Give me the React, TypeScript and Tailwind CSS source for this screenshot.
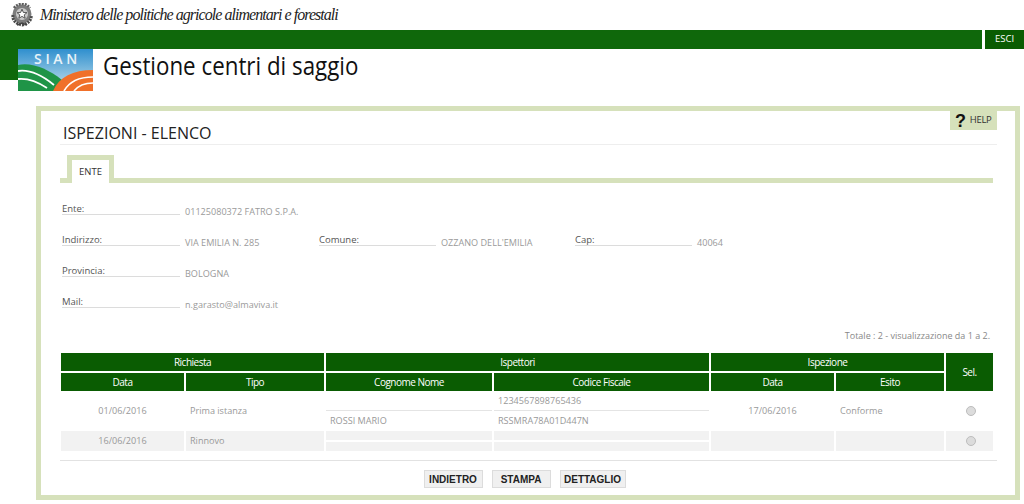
const FONT = "font-['Open_Sans',sans-serif]";

function Emblem() {
  return (
    <svg width="22" height="24" viewBox="0 0 22 24">
      <circle cx="11" cy="11" r="9.5" fill="#7d7d7d" />
      <path d="M2 12c-1 5 3 9 9 10 6-1 10-5 9-10" fill="none" stroke="#4a4a4a" strokeWidth="3" strokeDasharray="2 1" />
      <path d="M3 5c2-3 5-4 8-4s6 1 8 4" fill="none" stroke="#5c5c5c" strokeWidth="2.5" strokeDasharray="2 1" />
      <circle cx="11" cy="11" r="6" fill="#c9c9c9" />
      <path d="M11 6.2l1.4 3.3 3.5.2-2.7 2.2 1 3.4-3.2-1.9-3.2 1.9 1-3.4-2.7-2.2 3.5-.2z" fill="#fff" stroke="#333" strokeWidth="0.8" />
      <path d="M6 22l5-2 5 2" fill="none" stroke="#444" strokeWidth="1.5" />
    </svg>
  );
}

function SianLogo() {
  return (
    <svg width="75" height="42" viewBox="0 0 75 42" className="block">
      <defs>
        <linearGradient id="sky" x1="0" y1="0" x2="0" y2="1">
          <stop offset="0" stopColor="#2f8fce" />
          <stop offset="1" stopColor="#c9e4ee" />
        </linearGradient>
      </defs>
      <rect width="75" height="42" fill="url(#sky)" />
      <path d="M0 16c14-3 30 4 44 15l-8 11H0z" fill="#1f9447" />
      <path d="M0 22c13-2 25 5 36 14" fill="none" stroke="#fff" strokeWidth="1.8" />
      <path d="M0 30c10-1 20 3 29 9" fill="none" stroke="#fff" strokeWidth="1.8" />
      <path d="M35 42c6-14 20-21 40-21v21z" fill="#f0702a" />
      <path d="M46 42c5-9 15-14 29-14" fill="none" stroke="#fff" strokeWidth="1.7" />
      <path d="M56 42c4-5 10-8 19-8" fill="none" stroke="#fff" strokeWidth="1.7" />
      <text x="16" y="14.5" fill="#e8f3f8" fontSize="14" fontWeight="600" letterSpacing="3.7" fontFamily="Open Sans, sans-serif">SIAN</text>
    </svg>
  );
}

function Field({ label, value, width = "w-[118px]", valueW = "w-[134px]" }: { label: string; value: string; width?: string; valueW?: string }) {
  return (
    <div className="flex items-end">
      <div className={`${width} h-[15px] border-b border-[#dcdcdc] pt-[3px] text-[9.5px] leading-[11px] text-[#555]`}>{label}</div>
      <div className={`${valueW} translate-y-[2px] pl-[5px] text-[9.1px] leading-[11px] text-[#9a9a9a]`}>{value}</div>
    </div>
  );
}

const th = "bg-[#0a5c02] text-white text-[10px] tracking-[-0.5px] font-normal h-[18px] p-0 text-center";
const td = "p-0 text-[9.1px] text-[#999] font-normal";

function Radio() {
  return <span className="inline-block h-[10px] w-[10px] -translate-y-[1px] translate-x-[1px] rounded-full border border-[#bdbdbd] bg-[#dcdcdc] align-middle" />;
}

export default function App() {
  return (
    <div className={`${FONT} relative h-[504px] w-[1024px] overflow-hidden bg-white`}>
      {/* intestazione ministero */}
      <div className="flex h-[30px] items-center pl-[11px]">
        <Emblem />
        <span className="ml-[7px] font-['Liberation_Serif',serif] text-[16px] italic tracking-[-0.96px] text-[#222]">
          Ministero delle politiche agricole alimentari e forestali
        </span>
      </div>

      {/* barra verde */}
      <div className="flex h-[19px]">
        <div className="flex-1 bg-[#0f680b]" />
        <div className="ml-[3px] flex w-[39px] items-center justify-center bg-[#0a5c02] text-[9.5px] text-white">ESCI</div>
      </div>

      <div className="flex h-[42px]">
        <div className="h-[31px] w-[18px] bg-[#0f680b]" />
        <SianLogo />
        <h1 className="ml-[10px] origin-left scale-x-[0.893] whitespace-nowrap text-[25px] font-normal leading-[33px] text-[#111]">
          Gestione centri di saggio
        </h1>
      </div>

      {/* pannello */}
      <div className="relative ml-[36px] mt-[15px] h-[394px] w-[984px] border-[5px] border-[#d6e1bb] pl-[19px] pr-[18px]">
        <div className="absolute right-[18px] top-0 flex h-[19px] w-[47px] items-center bg-[#d6e1bb] pl-[5px] text-[9.5px] tracking-[-0.3px] text-[#333]">
          <span className="mr-[4px] font-['Liberation_Sans',sans-serif] text-[18px] font-bold leading-none text-[#111]">?</span>
          HELP
        </div>

        <div className="flex h-[34px] items-end border-b border-[#eeeeee] pl-[3px] text-[16px] leading-[21px] text-[#222]">
          ISPEZIONI - ELENCO
        </div>

        {/* tab */}
        <div className="relative mt-[10px] h-[28px] w-[933px]">
          <div className="absolute bottom-0 left-0 h-[5px] w-[933px] bg-[#d6e1bb]" />
          <div className="absolute bottom-0 left-[7px] flex h-[28px] w-[47px] items-center justify-center border-x-[5px] border-t-[5px] border-[#d6e1bb] bg-white pt-[2px] text-[9.5px] text-[#333]">
            ENTE
          </div>
        </div>

        {/* dati ente */}
        <div className="ml-[2px] mt-[17px] flex flex-col gap-[16px]">
          <Field label="Ente:" value="01125080372 FATRO S.P.A." valueW="w-[200px]" />
          <div className="flex">
            <Field label="Indirizzo:" value="VIA EMILIA N. 285" />
            <div className="ml-[5px]">
              <Field label="Comune:" value="OZZANO DELL'EMILIA" width="w-[117px]" valueW="w-[135px]" />
            </div>
            <div className="ml-[4px]">
              <Field label="Cap:" value="40064" width="w-[117px]" />
            </div>
          </div>
          <Field label="Provincia:" value="BOLOGNA" />
          <Field label="Mail:" value="n.garasto@almaviva.it" valueW="w-[200px]" />
        </div>

        <div className="mt-[22px] w-[930px] text-right text-[9px] leading-[12px] text-[#888]">
          Totale : 2 - visualizzazione da 1 a 2.
        </div>

        {/* tabella */}
        <table className="-ml-[1px] mt-[9px] w-[936px] table-fixed border-separate border-spacing-[2px]">
          <colgroup>
            <col className="w-[123px]" />
            <col className="w-[138px]" />
            <col className="w-[166px]" />
            <col className="w-[215px]" />
            <col className="w-[123px]" />
            <col className="w-[108px]" />
            <col />
          </colgroup>
          <thead>
            <tr>
              <th colSpan={2} className={th}>Richiesta</th>
              <th colSpan={2} className={th}>Ispettori</th>
              <th colSpan={2} className={th}>Ispezione</th>
              <th rowSpan={2} className={th}>Sel.</th>
            </tr>
            <tr>
              <th className={th}>Data</th>
              <th className={th}>Tipo</th>
              <th className={th}>Cognome Nome</th>
              <th className={th}>Codice Fiscale</th>
              <th className={th}>Data</th>
              <th className={th}>Esito</th>
            </tr>
          </thead>
          <tbody>
            <tr>
              <td className={`${td} h-[36px] text-center`}>01/06/2016</td>
              <td className={`${td} pl-[4px]`}>Prima istanza</td>
              <td className={td}>
                <div className="h-[18px] border-b border-[#e4e4e4]" />
                <div className="flex h-[18px] items-center pl-[4px] pt-[2px]">ROSSI MARIO</div>
              </td>
              <td className={td}>
                <div className="flex h-[18px] items-center border-b border-[#e4e4e4] pb-[1px] pl-[4px]">1234567898765436</div>
                <div className="flex h-[18px] items-center pl-[4px] pt-[2px]">RSSMRA78A01D447N</div>
              </td>
              <td className={`${td} text-center`}>17/06/2016</td>
              <td className={`${td} pl-[4px]`}>Conforme</td>
              <td className={`${td} text-center`}><Radio /></td>
            </tr>
            <tr>
              <td className={`${td} h-[20px] bg-[#f2f2f2] text-center`}>16/06/2016</td>
              <td className={`${td} bg-[#f2f2f2] pl-[4px]`}>Rinnovo</td>
              <td className={`${td} bg-[#f2f2f2] align-top`}>
                <div className="h-[11px] border-b-2 border-white" />
              </td>
              <td className={`${td} bg-[#f2f2f2] align-top`}>
                <div className="h-[11px] border-b-2 border-white" />
              </td>
              <td className={`${td} bg-[#f2f2f2]`} />
              <td className={`${td} bg-[#f2f2f2]`} />
              <td className={`${td} bg-[#f2f2f2] text-center`}><Radio /></td>
            </tr>
          </tbody>
        </table>

        <div className="mt-[7px] w-[937px] border-t border-[#e2e2e2]" />

        <div className="mt-[9px] flex w-[937px] justify-center gap-[9px] pr-[8px] font-['Liberation_Sans',sans-serif] text-[10px] font-bold text-[#222]">
          <button className="h-[18px] w-[59px] border border-[#dcdcdc] bg-[#f0f0f0]">INDIETRO</button>
          <button className="h-[18px] w-[59px] border border-[#dcdcdc] bg-[#f0f0f0]">STAMPA</button>
          <button className="h-[18px] w-[66px] border border-[#dcdcdc] bg-[#f0f0f0]">DETTAGLIO</button>
        </div>
      </div>
    </div>
  );
}
